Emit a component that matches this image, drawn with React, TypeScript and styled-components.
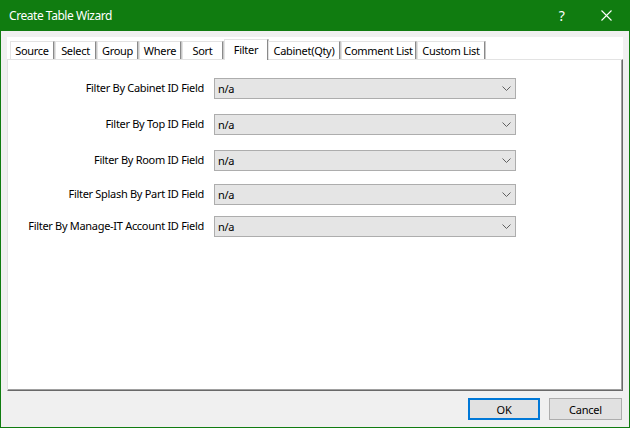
import * as React from "react";
import styled, { createGlobalStyle } from "styled-components";

const GlobalStyle = createGlobalStyle`
  html, body {
    margin: 0;
    padding: 0;
    background: #f0f0f0;
  }
  body {
    font-family: "Noto Sans", "Liberation Sans", sans-serif;
  }
`;

const Window = styled.div`
  width: 630px;
  height: 428px;
  box-sizing: border-box;
  display: flex;
  flex-direction: column;
  background: #f0f0f0;
  border: 1px solid #107c10;
  border-top: none;
`;

const TitleBar = styled.div`
  height: 31px;
  flex: none;
  display: flex;
  align-items: center;
  background: #107c10;
  color: #ffffff;
  font-size: 12px;
  letter-spacing: -0.45px;
  padding-left: 8px;
`;

const Title = styled.div`
  flex: 1;
`;

const TitleButton = styled.div`
  width: 45px;
  height: 31px;
  display: flex;
  align-items: center;
  justify-content: center;
  color: #ffffff;
  font-size: 14px;
`;

const Body = styled.div`
  flex: 1;
  display: flex;
  flex-direction: column;
  padding: 6px 6px 0 6px;
`;

const TabStrip = styled.div`
  height: 22px;
  display: flex;
  align-items: flex-end;
  background: #ffffff;
  padding-left: 3px;
  position: relative;
  z-index: 1;
`;

const Tab = styled.div<{ $w: number; $active?: boolean }>`
  width: ${p => p.$w}px;
  box-sizing: border-box;
  height: ${p => (p.$active ? 21 : 18)}px;
  margin-bottom: ${p => (p.$active ? -1 : 0)}px;
  margin-right: ${p => (p.$active ? 0 : 1)}px;
  display: flex;
  align-items: ${p => (p.$active ? "flex-start" : "center")};
  justify-content: center;
  padding-top: ${p => (p.$active ? 2 : 0)}px;
  background: #ffffff;
  border-left: 1px solid #e3e3e3;
  border-top: 1px solid #e3e3e3;
  border-right: 1px solid #8a8a8a;
  box-shadow: 1px 0 0 #c8c8c8;
  font-size: 11px;
  letter-spacing: -0.3px;
  color: #000000;
  white-space: nowrap;
`;

const Panel = styled.div`
  height: 332px;
  box-sizing: border-box;
  background: #ffffff;
  border-top: 1px solid #e3e3e3;
  border-left: 1px solid #e3e3e3;
  border-right: 1px solid #696969;
  border-bottom: 1px solid #696969;
  box-shadow: inset -1px -1px 0 #a0a0a0;
  padding-top: 18px;
  display: flex;
  flex-direction: column;
`;

const Row = styled.div<{ $top: number }>`
  margin-top: ${p => p.$top}px;
  display: grid;
  grid-template-columns: 196px 302px;
  column-gap: 10px;
  align-items: center;
`;

const Label = styled.div`
  text-align: right;
  font-size: 11px;
  letter-spacing: -0.3px;
  color: #000000;
  white-space: nowrap;
  margin-top: -2px;
`;

const Select = styled.div`
  height: 21px;
  box-sizing: border-box;
  display: flex;
  align-items: center;
  justify-content: space-between;
  background: #e5e5e5;
  border: 1px solid #adadad;
  padding: 0 4px 0 3px;
  font-size: 11px;
  letter-spacing: -0.3px;
  color: #000000;
`;

const Footer = styled.div`
  display: flex;
  justify-content: flex-end;
  gap: 9px;
  padding: 7px 1px 0 0;
`;

const Button = styled.div<{ $primary?: boolean }>`
  width: ${p => (p.$primary ? 72 : 73)}px;
  height: 22px;
  box-sizing: border-box;
  display: flex;
  align-items: center;
  justify-content: center;
  background: #e1e1e1;
  border: ${p => (p.$primary ? "2px solid #0078d7" : "1px solid #adadad")};
  font-size: 11px;
  letter-spacing: -0.2px;
  color: #000000;
`;

const tabs = [
  { label: "Source", w: 44 },
  { label: "Select", w: 41 },
  { label: "Group", w: 41 },
  { label: "Where", w: 42 },
  { label: "Sort", w: 41 },
  { label: "Filter", w: 44, active: true },
  { label: "Cabinet(Qty)", w: 72 },
  { label: "Comment List", w: 75 },
  { label: "Custom List", w: 68 },
];

const fields = [
  { label: "Filter By Cabinet ID Field", top: 0 },
  { label: "Filter By Top ID Field", top: 15 },
  { label: "Filter By Room ID Field", top: 15 },
  { label: "Filter Splash By Part ID Field", top: 13 },
  { label: "Filter By Manage-IT Account ID Field", top: 11 },
];

const Chevron: React.FC = () => (
  <svg width="9" height="5" viewBox="0 0 9 5">
    <path d="M0.5 0.5 L4.5 4.5 L8.5 0.5" fill="none" stroke="#606060" strokeWidth="1" />
  </svg>
);

export default function App() {
  return (
    <>
      <GlobalStyle />
      <Window>
        <TitleBar>
          <Title>Create Table Wizard</Title>
          <TitleButton>?</TitleButton>
          <TitleButton>
            <svg width="11" height="11" viewBox="0 0 11 11">
              <path d="M0.5 0.5 L10.5 10.5 M10.5 0.5 L0.5 10.5" stroke="#ffffff" strokeWidth="1.1" />
            </svg>
          </TitleButton>
        </TitleBar>
        <Body>
          <TabStrip>
            {tabs.map(t => (
              <Tab key={t.label} $w={t.w} $active={t.active}>
                {t.label}
              </Tab>
            ))}
          </TabStrip>
          <Panel>
            {fields.map(f => (
              <Row key={f.label} $top={f.top}>
                <Label>{f.label}</Label>
                <Select>
                  <span>n/a</span>
                  <Chevron />
                </Select>
              </Row>
            ))}
          </Panel>
          <Footer>
            <Button $primary>OK</Button>
            <Button>Cancel</Button>
          </Footer>
        </Body>
      </Window>
    </>
  );
}
